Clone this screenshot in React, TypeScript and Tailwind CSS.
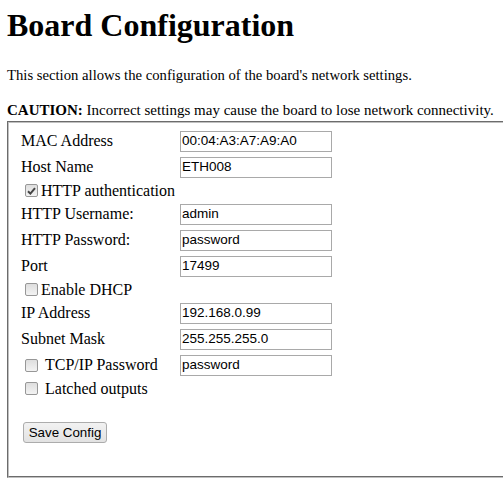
import React from 'react';

type Row = {
  label: string;
  value?: string;
  check?: boolean;
  checked?: boolean;
  wide?: boolean;
};

const rows: Row[] = [
  { label: 'MAC Address', value: '00:04:A3:A7:A9:A0' },
  { label: 'Host Name', value: 'ETH008' },
  { label: 'HTTP authentication', check: true, checked: true },
  { label: 'HTTP Username:', value: 'admin' },
  { label: 'HTTP Password:', value: 'password' },
  { label: 'Port', value: '17499' },
  { label: 'Enable DHCP', check: true },
  { label: 'IP Address', value: '192.168.0.99' },
  { label: 'Subnet Mask', value: '255.255.255.0' },
  { label: 'TCP/IP Password', check: true, wide: true, value: 'password' },
  { label: 'Latched outputs', check: true, wide: true },
];

const Checkbox: React.FC<{ checked?: boolean }> = ({ checked }) => (
  <span className="w-[13px] h-[13px] shrink-0 rounded-[2px] border border-[#979797] bg-gradient-to-b from-[#dedede] to-[#f3f3f3] flex items-center justify-center">
    {checked && (
      <svg width="9" height="8" viewBox="0 0 9 8">
        <path d="M1 4.2 L3.4 6.6 L8 1.2" fill="none" stroke="#454545" strokeWidth="2" />
      </svg>
    )}
  </span>
);

const TextBox: React.FC<{ value: string }> = ({ value }) => (
  <div className="w-[152px] h-[21px] border border-[#a9a9a9] bg-white pl-[1px] flex items-center text-[13.5px] text-black font-['Liberation_Sans',Arial,sans-serif]">
    {value}
  </div>
);

export default function App() {
  return (
    <div className="w-full h-[486px] overflow-hidden bg-white text-black font-['Liberation_Serif','Times_New_Roman',serif]">
      <div className="pt-[7px] pl-[7px] w-[560px]">
        <h1 className="text-[32px] leading-[37px] font-bold">Board Configuration</h1>
        <p className="mt-[22px] text-[14.7px] leading-[18px]">
          This section allows the configuration of the board's network settings.
        </p>
        <p className="mt-[17px] text-[15px] leading-[18px] whitespace-nowrap">
          <b>CAUTION:</b> Incorrect settings may cause the board to lose network connectivity.
        </p>
        <div className="mt-[2px] border-2 [border-style:groove] border-[#c0c0c0] pt-[5px] pl-[12px] pb-[32px]">
          {rows.map((row) => (
            <div
              key={row.label}
              className={`flex items-center text-[16px] ${row.value ? 'h-[26px]' : 'h-[21px]'}`}
            >
              <div className="w-[159px] flex items-center">
                {row.check ? (
                  <div className="flex items-center pl-[4px]">
                    <Checkbox checked={row.checked} />
                    <span className={row.wide ? 'ml-[7px]' : 'ml-[3px]'}>{row.label}</span>
                  </div>
                ) : (
                  <span>{row.label}</span>
                )}
              </div>
              {row.value && <TextBox value={row.value} />}
            </div>
          ))}
          <button className="mt-[23px] ml-[2px] w-[84px] h-[21px] rounded-[3px] border border-[#acacac] bg-gradient-to-b from-[#f2f2f2] to-[#e2e2e2] text-[13.33px] text-black font-['Liberation_Sans',Arial,sans-serif]">
            Save Config
          </button>
        </div>
      </div>
    </div>
  );
}
